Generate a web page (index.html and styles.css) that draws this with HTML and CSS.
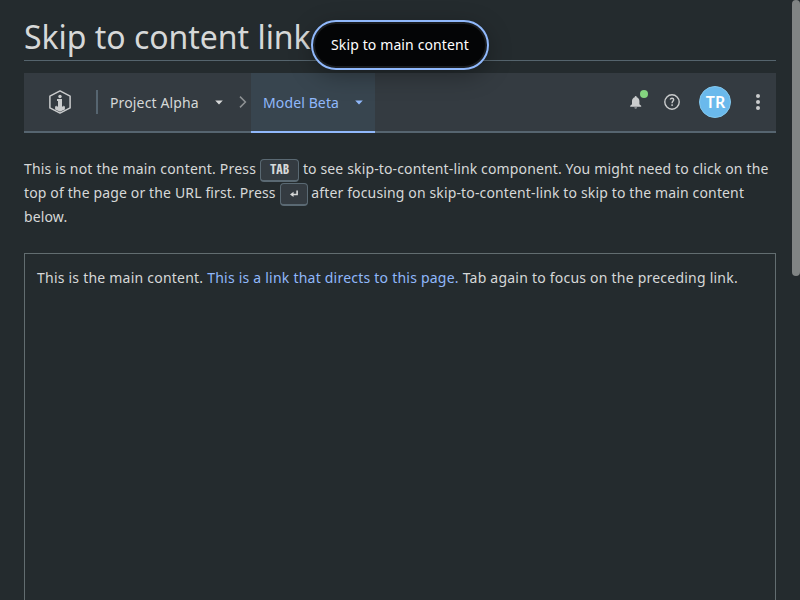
FILE: index.html
```
<!DOCTYPE html>
<html lang="en">
<head>
<meta charset="utf-8">
<title>Skip to content link</title>
<link rel="stylesheet" href="styles.css">
</head>
<body>
<a class="skip-link" href="#main">Skip to main content</a>
<h1 class="title"><span>Skip to content link</span></h1>
<header class="bar">
  <svg class="logo" width="24" height="24" viewBox="0 0 24 24" fill="none" stroke="#cacccd"><path d="M12 .9 22.1 6.1V17.9L12 23.1 1.9 17.9V6.1Z" stroke-width="1.5" stroke-linejoin="round"/><circle cx="12" cy="6.5" r="1.7" fill="#cacccd" stroke="none"/><path d="M9 9h5v7.500h1.500l-.5-1 1.900 1v3l-2.900 1.200-2 1-2-1-2.900-1.200v-3l1.900-1-.5 1H10v-5.500H9Z" fill="#cacccd" stroke="none"/></svg>
  <span class="divider"></span>
  <span class="crumb">Project Alpha</span>
  <svg class="caret" width="8" height="5" viewBox="0 0 8 5"><path d="M.2.4h7.6L4 4.6Z" fill="currentColor"/></svg>
  <svg class="chevron" width="8" height="12" viewBox="0 0 8 12" fill="none" stroke="#8e9294" stroke-width="1.5"><path d="m1 .6 5.4 5.4L1 11.4"/></svg>
  <div class="active"><span>Model Beta</span><svg class="caret" width="8" height="5" viewBox="0 0 8 5"><path d="M.2.4h7.6L4 4.6Z" fill="currentColor"/></svg></div>
  <div class="tools">
    <span class="bell"><svg width="16" height="16" viewBox="0 0 16 16" fill="#cacccd"><path d="M6.300 13.500h2.800a1.400 1 0 0 1-2.800 0ZM7.700 2a1 1 0 0 1 1 1v.3c1.700.5 2.700 2 2.700 3.700v3.300l1.800 1.500v.9H2.200v-.9L4 10.300V7c0-1.700 1-3.200 2.700-3.700V3a1 1 0 0 1 1-1Z"/></svg><i class="dot"></i></span>
    <svg class="help" width="16" height="16" viewBox="0 0 16 16" fill="none" stroke="#cacccd" stroke-width="1.4"><circle cx="8" cy="8" r="7.2"/><path d="M6.200 5.500C6.500 4.600 7.200 4.300 8 4.300c1 0 1.700.6 1.700 1.500C9.700 7 8.100 7.100 8.100 9.200M8.100 10.300v1.600"/></svg>
    <span class="avatar">TR</span>
    <svg class="more" width="4" height="16" viewBox="0 0 4 16" fill="#cacccd"><circle cx="2" cy="2" r="2"/><circle cx="2" cy="8" r="2"/><circle cx="2" cy="14" r="2"/></svg>
  </div>
</header>
<p class="intro"><span class="lead">This is not the main content. Press </span><kbd>TAB</kbd> to see skip-to-content-link component. You might need to click on the top of the page or the URL first. Press <kbd><svg width="8" height="8" viewBox="0 0 9 8" fill="none" stroke="currentColor" stroke-width="1.8"><path d="M8 0v4.500H2"/><path d="M4 1.500 0 4.500 4 7.500Z" fill="currentColor" stroke="none"/></svg></kbd> after focusing on skip-to-content-link to skip to the main content below.</p>
<main id="main" class="main">This is the main content. <a href="#main">This is a link that directs to this page.</a> Tab again to focus on the preceding link.</main>
<div class="scroll"></div>
</body>
</html>
```
FILE: styles.css
```
* { box-sizing: border-box; }
html { height: 100%; overflow: hidden; background: #242b2e; }
body {
  display: flex;
  flex-direction: column;
  margin: 0;
  padding: 12px 24px 0;
  height: 100%;
  overflow: hidden;
  color: #d6d8d8;
  font: 14px/24px "Noto Sans", sans-serif;
}
.skip-link {
  position: absolute;
  z-index: 2;
  left: 313px;
  top: 22px;
  width: 174px;
  height: 46px;
  border-radius: 23px;
  background: #040506;
  border: 2px solid #1a1d20;
  outline: 2px solid #90b8fb;
  color: #fff;
  text-align: center;
  line-height: 42px;
  letter-spacing: .12px;
  text-decoration: none;
  box-shadow: 0 6px 24px rgba(0, 0, 0, .35);
}
.title {
  flex: none;
  margin: 0 0 12px;
  height: 49px;
  border-bottom: 1px solid #55646d;
  font-size: 32px;
  font-weight: 400;
  line-height: 49px;
  letter-spacing: -.03px;
}
.bar {
  flex: none;
  display: flex;
  align-items: center;
  height: 60px;
  padding-left: 24px;
  background: #343b41;
  border-bottom: 2px solid #566570;
}
.divider { width: 2px; height: 24px; margin: 0 12px 0 24px; background: #566570; }
.crumb { width: 105px; line-height: 22px; padding-top: 2px; letter-spacing: .14px; }
.active span { padding-top: 2px; letter-spacing: .12px; }
.caret { flex: none; }
.chevron { margin: 0 4px 0 16px; }
.active {
  display: flex;
  align-items: center;
  align-self: stretch;
  justify-content: space-between;
  width: 124px;
  margin-bottom: -2px;
  padding: 0 12px;
  background: #38454f;
  border-bottom: 2px solid #90b8fb;
  color: #90b8fb;
}
.tools { display: flex; align-items: center; margin-left: auto; padding-right: 16px; }
.bell { position: relative; height: 16px; margin-right: 20px; }
.bell svg { display: block; }
.dot { position: absolute; left: 12px; top: -4px; width: 8px; height: 8px; border-radius: 50%; background: #84d47f; }
.avatar {
  width: 32px;
  height: 32px;
  margin: 0 25px 0 19px;
  border-radius: 50%;
  background: #6ab9ec;
  border: 1px solid #83c8ee;
  color: #fff;
  padding-left: 1px;
  font-size: 16px;
  font-weight: 600;
  line-height: 30px;
  text-align: center;
}
.intro { flex: none; margin: 24px 0; height: 72px; letter-spacing: .14px; }
.lead { letter-spacing: .19px; }
kbd {
  display: inline-block;
  height: 23px;
  padding: 0 9px;
  border: 1px solid #5a6973;
  border-bottom-width: 2px;
  border-radius: 4px;
  background: #343b41;
  font: bold 12.8px/17px "Noto Sans Mono CJK JP", "Liberation Mono", monospace;
  letter-spacing: 0;
  vertical-align: top;
  margin-top: 2px;
  margin-bottom: -2px;
}
.main { flex: 1; border: 1px solid #626d70; border-bottom: 0; padding: 12px; letter-spacing: .225px; }
.main a { color: #90b8fb; text-decoration: none; }
.scroll { position: fixed; right: 0; top: 0; width: 8px; height: 276px; border-radius: 4px; background: #808484; }
```
